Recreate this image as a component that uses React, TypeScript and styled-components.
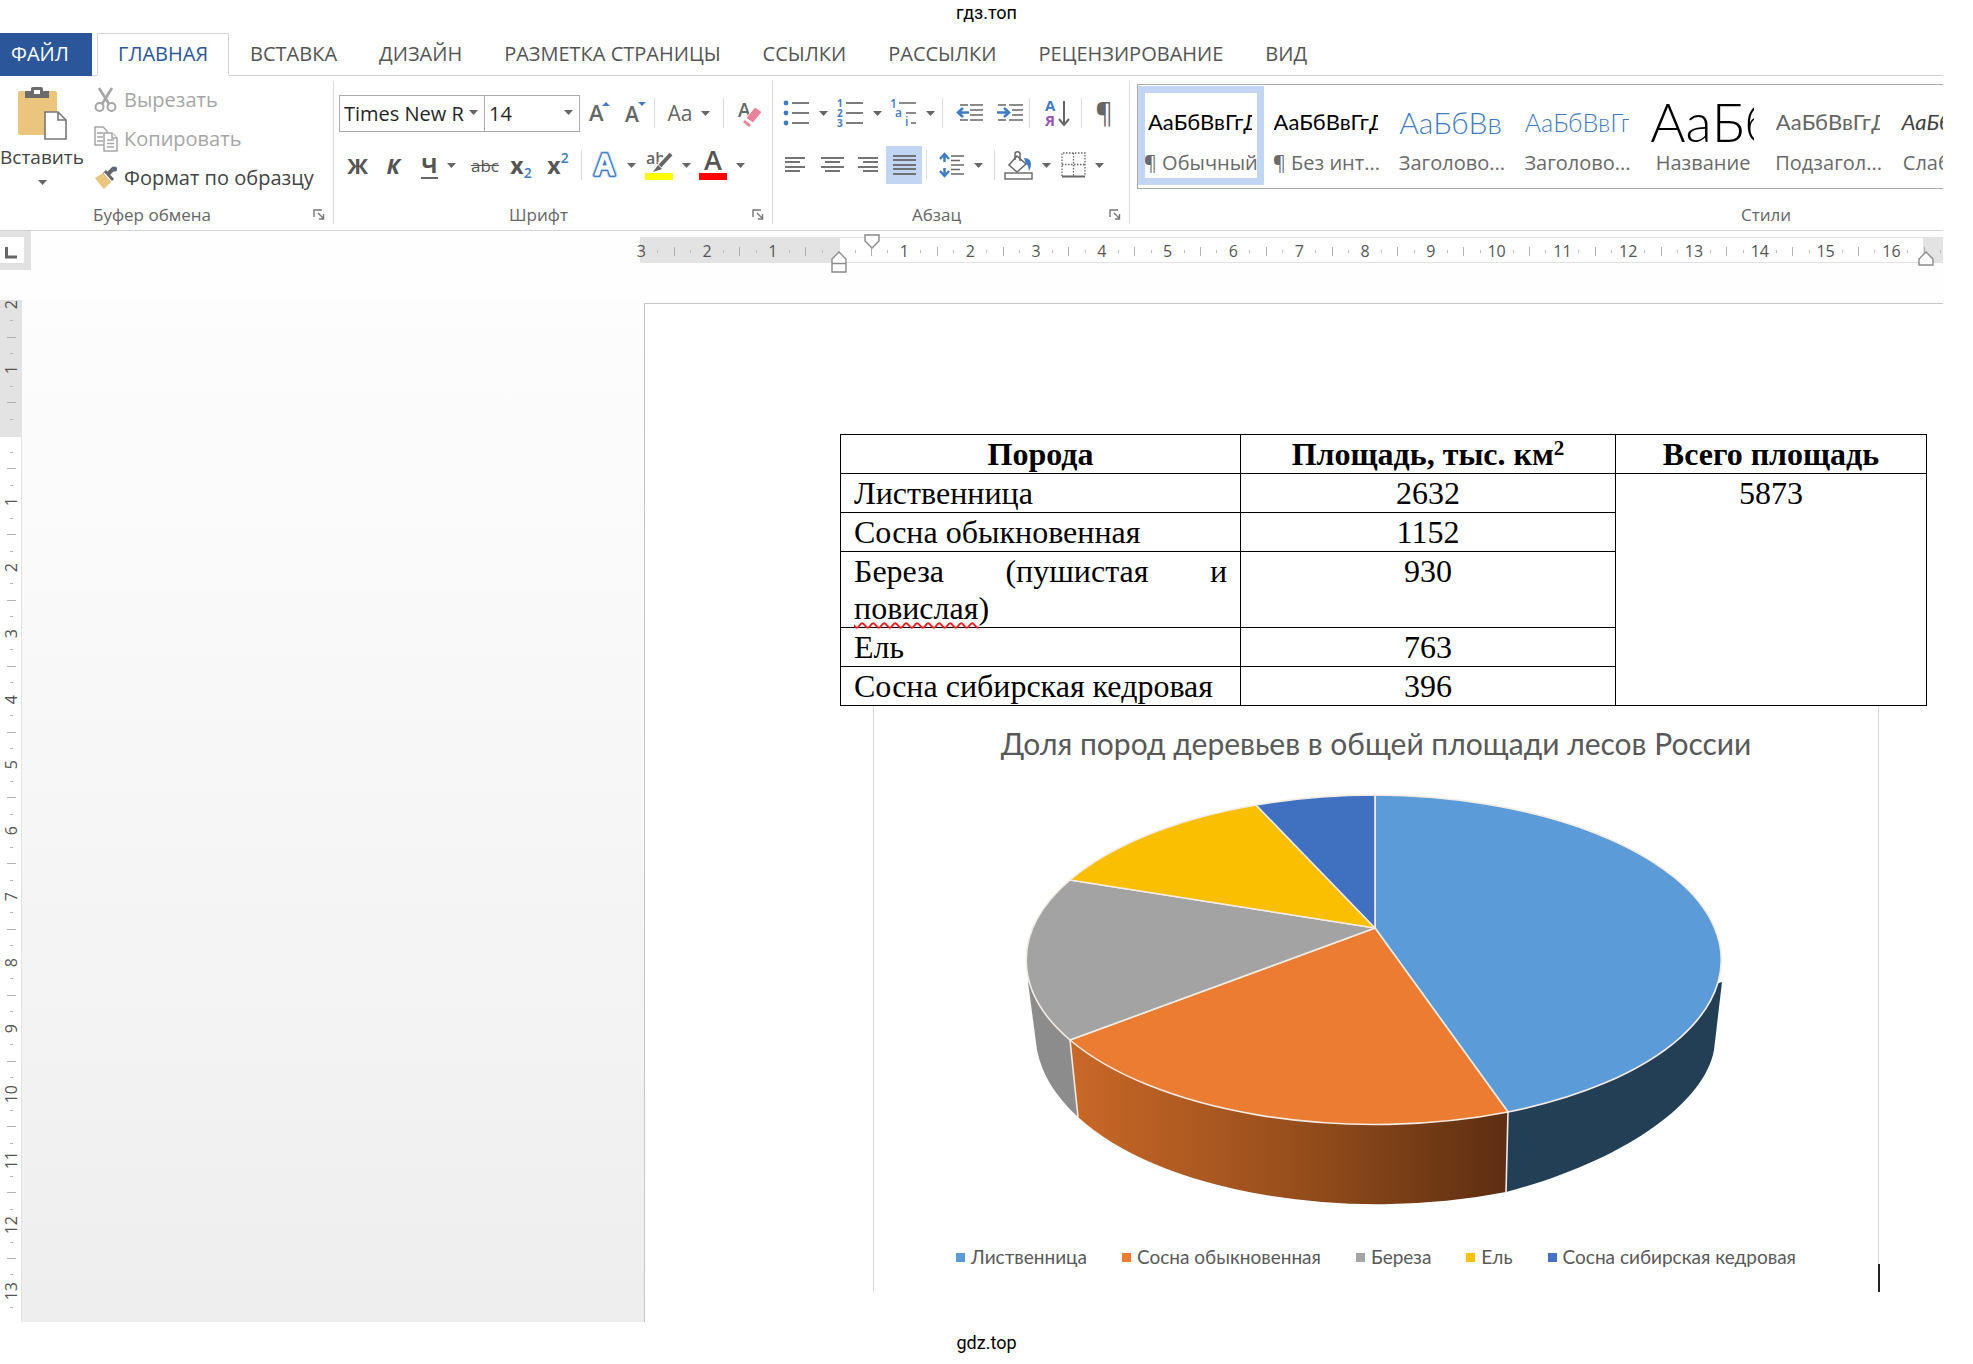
import React from "react";
import styled, { createGlobalStyle, css } from "styled-components";

const ui = `"Open Sans", "Noto Sans", sans-serif`;
const office = `Lato, "Open Sans", sans-serif`;
const ink = "#666666";
const blue = "#3f7cc4";

const Global = createGlobalStyle`
  *, *::before, *::after { box-sizing: border-box; }
  body { margin: 0; background: #fff; font-family: ${ui}; color: #444; }
  button, select { font: inherit; color: inherit; }
  button { border: 0; background: none; padding: 0; cursor: pointer; }
  svg { display: block; flex: none; overflow: visible; }
`;

/* ---------- shell ---------- */

const Shell = styled.div`
  display: flex;
  flex-direction: column;
`;

const SiteMark = styled.div`
  font: 18px/26px Roboto, sans-serif;
  color: #000;
  text-align: center;
`;

const SiteHeader = styled(SiteMark).attrs({ as: "header" })`
  padding-bottom: 7px;
`;

const SiteFooter = styled(SiteMark).attrs({ as: "footer" })`
  padding: 8px 0;
`;

const Frame = styled.main`
  margin-right: 30px;
  overflow: hidden;
`;

/* ---------- tabs ---------- */

const Tabs = styled.nav`
  display: flex;
  height: 43px;
  border-bottom: 1px solid #d4d4d4;
`;

const Tab = styled.button<{ $active?: boolean }>`
  height: 43px;
  padding: 0 20px;
  font-size: 20px;
  line-height: 38px;
  color: #555;
  white-space: nowrap;
  border: solid transparent;
  border-width: 1px 1px 3px;
  ${(p) =>
    p.$active &&
    css`
      color: #2b579a;
      background: #fff;
      border-color: #d4d4d4;
      border-bottom-color: #fff;
    `}
`;

const FileTab = styled(Tab)`
  width: 92px;
  margin-right: 5px;
  padding: 0 0 0 10px;
  text-align: left;
  color: #fff;
  background: #2b579a;
`;

/* ---------- ribbon ---------- */

const Ribbon = styled.div`
  display: flex;
  height: 155px;
  border-bottom: 1px solid #d4d4d4;
  overflow: hidden;
`;

const Group = styled.section<{ $width: number }>`
  display: flex;
  flex-direction: column;
  flex: none;
  width: ${(p) => p.$width}px;
  position: relative;
  &:not(:last-child)::after {
    content: "";
    position: absolute;
    right: 0;
    top: 5px;
    bottom: 6px;
    width: 1px;
    background: #dcdcdc;
  }
`;

const GroupBody = styled.div`
  flex: 1;
  display: flex;
`;

const GroupFoot = styled.div`
  display: flex;
  align-items: center;
  height: 27px;
  padding-bottom: 5px;
  font-size: 17px;
  color: #666;
`;

const GroupName = styled.span`
  flex: 1;
  text-align: center;
`;

const Launcher = styled.button`
  width: 30px;
  padding-left: 9px;
`;

const PasteButton = styled.button`
  display: flex;
  flex-direction: column;
  align-items: center;
  width: 84px;
  padding-top: 10px;
  font-size: 19px;
  line-height: 26px;
  color: #444;
  svg + span { margin-top: 4px; }
  span + svg { margin-top: 10px; }
`;

const ClipActions = styled.div`
  display: flex;
  flex-direction: column;
  padding: 4px 0 0 10px;
`;

const ClipAction = styled.button`
  display: flex;
  align-items: center;
  gap: 6px;
  height: 39px;
  font-size: 20px;
  white-space: nowrap;
  color: #444;
  &:disabled { color: #a6a6a6; }
`;

const ToolRows = styled.div<{ $pad: number }>`
  display: flex;
  flex-direction: column;
  gap: 14px;
  padding: 18px 0 0 ${(p) => p.$pad}px;
`;

const ToolRow = styled.div`
  display: flex;
  align-items: center;
  height: 38px;
`;

const Tool = styled.button<{ $width: number; $on?: boolean }>`
  display: flex;
  align-items: center;
  justify-content: center;
  gap: 9px;
  flex: none;
  width: ${(p) => p.$width}px;
  height: 38px;
  background: ${(p) => (p.$on ? "#c2d5f2" : "none")};
`;

const Divider = styled.i<{ $wide?: boolean }>`
  flex: none;
  width: 1px;
  height: 30px;
  margin: 0 ${(p) => (p.$wide ? 5 : 2)}px 0 ${(p) => (p.$wide ? 4 : 2)}px;
  background: #dcdcdc;
`;

const Combo = styled.div<{ $width: number }>`
  position: relative;
  width: ${(p) => p.$width}px;
  height: 37px;
  svg {
    position: absolute;
    right: 7px;
    top: 15px;
    pointer-events: none;
  }
  & + & { margin-left: -1px; }
`;

const ComboSelect = styled.select`
  appearance: none;
  width: 100%;
  height: 37px;
  padding: 0 18px 0 4px;
  border: 1px solid #ababab;
  border-radius: 0;
  background: #fff;
  color: #262626;
  font-size: 20px;
`;

const FormatGlyph = styled.span<{ $italic?: boolean; $underline?: boolean }>`
  font-size: 22px;
  line-height: 26px;
  font-weight: 700;
  color: #555;
  font-style: ${(p) => (p.$italic ? "italic" : "normal")};
  border-bottom: ${(p) => (p.$underline ? "2px solid #666" : "0")};
`;

const Strike = styled.s`
  font-size: 17px;
  color: #555;
`;

const Script = styled.span<{ $up?: boolean }>`
  display: flex;
  align-items: center;
  height: 30px;
  font-size: 23px;
  font-weight: 700;
  color: #555;
  small {
    align-self: ${(p) => (p.$up ? "flex-start" : "flex-end")};
    font-size: 14px;
    line-height: 15px;
    font-weight: 600;
    color: ${blue};
  }
`;

const CaseGlyph = styled.span`
  font-size: 21px;
  color: ${ink};
`;

const Pilcrow = styled.span`
  font-size: 27px;
  line-height: 30px;
  color: ${ink};
`;

/* ---------- styles gallery ---------- */

const Gallery = styled.div`
  flex: 1;
  display: flex;
  height: 105px;
  margin: 8px 0 0 7px;
  border: 1px solid #ababab;
`;

const GalleryGrid = styled.div`
  display: grid;
  grid-template-columns: repeat(7, 1fr);
  width: 879px;
  padding: 1px 0 3px;
`;

const StyleCard = styled.button<{ $on?: boolean }>`
  display: flex;
  flex-direction: column;
  padding: 5px 3px 0;
  overflow: hidden;
  border: 7px solid ${(p) => (p.$on ? "#c2d5f2" : "transparent")};
`;

const Preview = styled.span<{ $size: number; $color: string; $light?: boolean; $italic?: boolean }>`
  display: flex;
  align-items: flex-end;
  width: 104px;
  height: 46px;
  overflow: hidden;
  white-space: nowrap;
  font-family: ${office};
  font-size: ${(p) => p.$size}px;
  font-weight: ${(p) => (p.$light ? 300 : 400)};
  font-style: ${(p) => (p.$italic ? "italic" : "normal")};
  line-height: 44px;
  color: ${(p) => p.$color};
`;

const StyleName = styled.span`
  align-self: center;
  margin-top: 5px;
  font-size: 20px;
  line-height: 28px;
  color: #6a6a6a;
  white-space: nowrap;
`;

/* ---------- workspace & rulers ---------- */

const Workspace = styled.div`
  background: linear-gradient(#fefefe, #f6f6f6 55%, #eeeeee);
`;

const RulerBar = styled.div`
  display: flex;
  height: 69px;
  background: #fefefe;
`;

const TabStop = styled.button`
  flex: none;
  width: 31px;
  height: 39px;
  padding: 6px 0 0 5px;
  border: solid #e1e1e1;
  border-width: 6px 7px 7px 0;
  background: #fff;
`;

const HRuler = styled.div`
  position: relative;
  flex: none;
  width: 1316px;
  height: 26px;
  margin: 6px 0 0 602px;
`;

const HScale = styled.div`
  display: grid;
  grid-template-columns: repeat(80, 1fr);
  align-items: center;
  height: 26px;
  border: solid transparent;
  border-width: 1px 0;
  background: linear-gradient(90deg, transparent 7px, #e3e3e3 7px 207px, #fff 207px 1290px, #e3e3e3 1290px) padding-box,
    linear-gradient(90deg, transparent 7px, #e3e3e3 7px) border-box;
`;

const HMark = styled.span<{ $kind: "num" | "dot" | "tick" }>`
  justify-self: center;
  display: flex;
  justify-content: center;
  ${(p) =>
    p.$kind === "num"
      ? css`
          width: 20px;
          margin: 0 -2px;
          font-size: 16px;
          line-height: 26px;
          color: #555;
        `
      : css`
          width: 1px;
          height: ${p.$kind === "tick" ? 9 : 3}px;
          background: ${p.$kind === "tick" ? "#b0b0b0" : "#c0c0c0"};
        `}
`;

const Indent = styled.svg<{ $x: number; $y: number }>`
  position: absolute;
  left: ${(p) => p.$x}px;
  top: ${(p) => p.$y}px;
`;

const Desk = styled.div`
  display: flex;
  align-items: flex-start;
`;

const VRuler = styled.div`
  flex: none;
  width: 22px;
  height: 1022px;
  overflow: hidden;
  border-right: 1px solid #e3e3e3;
  background: linear-gradient(#e3e3e3 137px, #fff 137px);
`;

const VScale = styled.div`
  display: grid;
  grid-template-rows: repeat(64, 1fr);
  justify-items: center;
  align-items: center;
  height: 1053px;
  margin-top: -4px;
`;

const VMark = styled.span<{ $kind: "num" | "dot" | "tick" }>`
  ${(p) =>
    p.$kind === "num"
      ? css`
          writing-mode: vertical-rl;
          transform: rotate(180deg);
          margin: -4px 0;
          font-size: 16px;
          line-height: 22px;
          color: #555;
        `
      : css`
          height: 1px;
          width: ${p.$kind === "tick" ? 9 : 3}px;
          background: ${p.$kind === "tick" ? "#b0b0b0" : "#b8b8b8"};
        `}
`;

/* ---------- page ---------- */

const Page = styled.article`
  flex: 1;
  min-width: 0;
  height: 1019px;
  margin: 3px 0 0 622px;
  padding: 130px 16px 0 195px;
  border: solid #c6c6c6;
  border-width: 1px 0 0 1px;
  background: #fff;
`;

const DataTable = styled.table`
  width: 100%;
  table-layout: fixed;
  border-collapse: collapse;
  font: 32px/37px "Liberation Serif", serif;
  color: #000;
  th, td {
    padding: 1px 13px 0;
    border: 1px solid #000;
    vertical-align: top;
    text-align: center;
  }
  tbody th {
    font-weight: 400;
    text-align: justify;
  }
  sup { font-size: 21px; line-height: 0; vertical-align: 10px; }
`;

const Column = styled.col<{ $share: number }>`
  width: ${(p) => p.$share}px;
`;

const Misspelt = styled.span`
  text-decoration: underline wavy #e02020 2px;
  text-underline-offset: 3px;
  text-decoration-skip-ink: none;
`;

const Chart = styled.figure`
  position: relative;
  display: flex;
  flex-direction: column;
  align-items: center;
  height: 586px;
  margin: 0 48px 0 33px;
  padding-top: 17px;
  border: solid #d9d9d9;
  border-width: 0 1px;
  font-family: ${office};
  color: #595959;
`;

const ChartTitle = styled.figcaption`
  font-size: 30px;
  line-height: 40px;
  margin-bottom: 27px;
  white-space: nowrap;
`;

const Legend = styled.ul`
  display: flex;
  gap: 35px;
  margin: 33px 0 0;
  padding: 0;
  list-style: none;
  font-size: 19px;
  line-height: 24px;
  white-space: nowrap;
`;

const LegendItem = styled.li<{ $color: string }>`
  display: flex;
  align-items: center;
  gap: 6px;
  &::before {
    content: "";
    width: 9px;
    height: 9px;
    background: ${(p) => p.$color};
  }
`;

const Caret = styled.i`
  position: absolute;
  right: -2px;
  bottom: 0;
  width: 2px;
  height: 28px;
  background: #222;
`;

/* ---------- icons ---------- */

const Arrow = () => (
  <svg width="9" height="5" viewBox="0 0 9 5">
    <path d="M0 0h9L4.5 5z" fill={ink} />
  </svg>
);

const Lines = ({ rows, w, h }: { rows: [number, number, number][]; w: number; h: number }) => (
  <svg width={w} height={h} viewBox={`0 0 ${w} ${h}`}>
    {rows.map(([x1, x2, y]) => (
      <path key={y} d={`M${x1} ${y}H${x2}`} stroke={ink} strokeWidth="1.8" />
    ))}
  </svg>
);

const LauncherIcon = () => (
  <svg width="12" height="11" viewBox="0 0 12 11" fill="none" stroke="#777" strokeWidth="1.4">
    <path d="M1 8V1h8M5 4l5 5M10.5 5v5H6" />
  </svg>
);

const PasteIcon = () => (
  <svg width="50" height="54" viewBox="0 0 50 54">
    <rect x="1" y="5" width="39" height="44" rx="2" fill="#ebc57e" />
    <path d="M8 12V5h6V3q0-2 2-2h8q2 0 2 2v2h6v7z" fill="#6b6b6b" />
    <rect x="17" y="4" width="6" height="4" fill="#fff" />
    <path d="M28 26h13l8 8v19H28z" fill="#fff" stroke="#777" strokeWidth="1.6" />
    <path d="M41 26v8h8" fill="none" stroke="#777" strokeWidth="1.6" />
  </svg>
);

const CutIcon = () => (
  <svg width="24" height="26" viewBox="0 0 24 26" fill="none" stroke="#a6a6a6">
    <path d="M5 1l10 16M18 1L8 17" strokeWidth="2.6" />
    <circle cx="5.500" cy="20" r="4" strokeWidth="2" />
    <circle cx="17.500" cy="20" r="4" strokeWidth="2" />
  </svg>
);

const CopyIcon = () => (
  <svg width="24" height="26" viewBox="0 0 24 26" fill="#fff" stroke="#a6a6a6" strokeWidth="1.5">
    <path d="M1 1h8l4 4v14H1z" />
    <path d="M3 7h6M3 11h6M3 15h6" />
    <path d="M10 7h8l5 5v13H10z" />
    <path d="M18 7v5h5M13 14h7M13 17.500h7M13 21h7" />
  </svg>
);

const BrushIcon = () => (
  <svg width="24" height="24" viewBox="0 0 24 24">
    <path d="M1 12l8-5 8 9-7 7c-3-3-6-7-9-11z" fill="#ebc57e" />
    <path d="M9 7l3-3 8 9-3 3z" fill="#666" />
    <path d="M14 8l6-6" stroke="#666" strokeWidth="4" />
    <circle cx="20.500" cy="3" r="2.600" fill="#5d6a80" />
    <path d="M10 7l8 9" stroke="#fff" strokeWidth="1.2" />
  </svg>
);

const SizeIcon = ({ up }: { up?: boolean }) => (
  <svg width="22" height="26" viewBox="0 0 22 26">
    <text x="0" y={up ? 21 : 22} fontFamily={ui} fontSize={up ? 22 : 21} fontWeight="600" fill={ink}>
      A
    </text>
    <path d={up ? "M13 6h8l-4-4z" : "M13 2h8l-4 4z"} fill={blue} />
  </svg>
);

const EraseIcon = () => (
  <svg width="24" height="27" viewBox="0 0 24 27">
    <text x="0" y="17" fontFamily={ui} fontSize="19" fontWeight="600" fill={ink}>
      A
    </text>
    <path d="M8 18l9-11 7 5-9 11z" fill="#e8829a" stroke="#fff" strokeWidth="1" />
    <path d="M7 20l6 5-2 2-6-5z" fill="#e8829a" />
  </svg>
);

const EffectIcon = () => (
  <svg width="25" height="30" viewBox="0 0 25 30">
    <g fontFamily={ui} fontSize="29" fontWeight="600" strokeLinejoin="round">
      <text x="2" y="25" fill="#c5dcf5" stroke="#c5dcf5" strokeWidth="6">A</text>
      <text x="2" y="25" fill="#fff" stroke={blue} strokeWidth="4">A</text>
      <text x="2" y="25" fill="#fff" stroke="#fff" strokeWidth="1">A</text>
    </g>
  </svg>
);

const HighlightIcon = () => (
  <svg width="28" height="30" viewBox="0 0 28 30">
    <text x="1" y="14" fontFamily={ui} fontSize="16" fontWeight="600" fill={ink}>ab</text>
    <path d="M26 3l-11 12" stroke="#fff" strokeWidth="7" />
    <path d="M26 4l-11 12" stroke={ink} strokeWidth="4" />
    <path d="M13 15l4 4-9 3z" fill={ink} />
    <rect y="23" width="28" height="7" fill="#ffff00" />
  </svg>
);

const FontColorIcon = () => (
  <svg width="28" height="30" viewBox="0 0 28 30">
    <text x="5" y="20" fontFamily={ui} fontSize="27" fontWeight="600" fill="#555">A</text>
    <rect y="23" width="28" height="7" fill="#ff0000" />
  </svg>
);

const BulletsIcon = () => (
  <svg width="27" height="26" viewBox="0 0 27 26">
    {[3, 13, 23].map((y) => (
      <g key={y}>
        <circle cx="3" cy={y} r="2.4" fill={blue} />
        <path d={`M9 ${y}h17`} stroke={ink} strokeWidth="1.7" />
      </g>
    ))}
  </svg>
);

const NumbersIcon = () => (
  <svg width="27" height="28" viewBox="0 0 27 28">
    {[4, 14, 24].map((y, i) => (
      <g key={y}>
        <text x="0" y={y + 4} fontFamily={ui} fontSize="10" fontWeight="700" fill={blue}>
          {i + 1}
        </text>
        <path d={`M9 ${y}h17`} stroke={ink} strokeWidth="1.7" />
      </g>
    ))}
  </svg>
);

const OutlineIcon = () => (
  <svg width="27" height="28" viewBox="0 0 27 28">
    <g fontFamily={ui} fontSize="12" fontWeight="600" fill={blue}>
      <text x="0" y="9">1</text>
      <text x="5" y="18">a</text>
      <text x="15" y="27">i</text>
    </g>
    <path d="M9 4h17M16 14h10M21 24h5" stroke={ink} strokeWidth="1.7" />
  </svg>
);

const ShiftIcon = ({ right }: { right?: boolean }) => (
  <svg width="26" height="20" viewBox="0 0 26 20" fill="none">
    <path
      d={right ? "M1 2h8M12 2h14M15 7h11M15 12h11M1 17h8M12 17h14" : "M3 2h8M13 2h13M13 7h13M13 12h13M3 17h8M13 17h13"}
      stroke={ink}
      strokeWidth="1.6"
    />
    <path d={right ? "M0 9.500h12M7 5l5 4.500-5 4.500" : "M1 9.500h11M6 5l-5 4.500 5 4.500"} stroke={blue} strokeWidth="2.6" />
  </svg>
);

const SortIcon = () => (
  <svg width="25" height="30" viewBox="0 0 25 30">
    <g fontFamily={ui} fontSize="15" fontWeight="700">
      <text x="0" y="13" fill={blue}>А</text>
      <text x="0" y="28" fill="#9557b5">Я</text>
    </g>
    <path d="M19 3v23M14 21l5 6 5-6" fill="none" stroke={ink} strokeWidth="2" />
  </svg>
);

const SpacingIcon = () => (
  <svg width="26" height="28" viewBox="0 0 26 28" fill="none">
    <path d="M5.500 3v8M1 8l4.500-5L10 8M5.500 17v8M1 20l4.500 5 4.500-5" stroke={blue} strokeWidth="2.500" />
    <path d="M12 5h13M12 9.500h9M12 14h13M12 18.500h9M12 23h13" stroke={ink} strokeWidth="1.600" />
  </svg>
);

const FillIcon = () => (
  <svg width="29" height="29" viewBox="0 0 29 29">
    <path d="M13 5l9 8-9 8-8-7z" fill="#fff" stroke={ink} strokeWidth="1.500" />
    <path d="M11 9V3c0-3 5-3 5 0v7" fill="none" stroke={ink} strokeWidth="1.500" />
    <path d="M20 7c7 0 9 6 5 13-1-5-1-6-3-7z" fill={blue} />
    <rect x="1" y="22" width="27" height="6" fill="#fff" stroke={ink} strokeWidth="1.400" />
  </svg>
);

const BordersIcon = () => (
  <svg width="25" height="26" viewBox="0 0 25 26" fill="none" stroke={ink}>
    <path d="M1 24V1h23v23M12.500 1v23M1 12.500h23" strokeWidth="1.300" strokeDasharray="1.500 1.500" />
    <path d="M1 24.500h23" strokeWidth="2" />
  </svg>
);

/* ---------- data ---------- */

const tabs = ["ГЛАВНАЯ", "ВСТАВКА", "ДИЗАЙН", "РАЗМЕТКА СТРАНИЦЫ", "ССЫЛКИ", "РАССЫЛКИ", "РЕЦЕНЗИРОВАНИЕ", "ВИД"];

const styleCards = [
  { name: "¶ Обычный", text: "АаБбВвГгДд", size: 22, color: "#000" },
  { name: "¶ Без инт...", text: "АаБбВвГгДд", size: 22, color: "#000" },
  { name: "Заголово...", text: "АаБбВвГг", size: 30, color: "#3f7cc4", light: true },
  { name: "Заголово...", text: "АаБбВвГг", size: 25, color: "#3f7cc4", light: true },
  { name: "Название", text: "АаБб", size: 54, color: "#000", light: true },
  { name: "Подзагол...", text: "АаБбВвГгДд", size: 22, color: "#666" },
  { name: "Слабое в...", text: "АаБбВвГгДд", size: 22, color: "#404040", italic: true },
];

const series = [
  { name: "Лиственница", color: "#5b9bd5" },
  { name: "Сосна обыкновенная", color: "#ed7d31" },
  { name: "Береза", color: "#a5a5a5" },
  { name: "Ель", color: "#ffc000" },
  { name: "Сосна сибирская кедровая", color: "#4472c4" },
];

const marks = (from: number, count: number, last: number) =>
  Array.from({ length: count }, (_, i) => {
    const cm = from + Math.floor(i / 4);
    if (i % 4 === 0) return { kind: "num" as const, label: cm === 0 || cm > last ? "" : String(Math.abs(cm)) };
    return { kind: i % 4 === 2 ? ("tick" as const) : ("dot" as const), label: "" };
  });

const Pie = () => (
  <svg width="710" height="422" viewBox="1021 790 710 422" role="img" aria-label="Объёмная круговая диаграмма">
    <defs>
      <linearGradient id="rim" x1="0" x2="1">
        <stop offset="0" stopColor="#c96828" />
        <stop offset="0.5" stopColor="#984f1c" />
        <stop offset="1" stopColor="#5d2e12" />
      </linearGradient>
    </defs>
    <path d="M1028 982L1037 1050C1042 1075 1056 1097 1078 1117L1100 1000z" fill="#8c8c8c" />
    <path d="M1722 982L1714 1050C1704 1105 1620 1162 1506 1192L1508 1050z" fill="#233f55" />
    <path d="M1070 1040L1078 1117A337 161 0 0 0 1506 1192L1508 1112L1375 1000z" fill="url(#rim)" />
    <path d="M1070 1040L1078 1117M1508 1112L1506 1192" stroke="#f3ebe4" strokeWidth="1.600" />
    <g stroke="#f6ece4" strokeWidth="1.600" strokeLinejoin="round">
      <path d="M1375 928V795A349 165 0 0 1 1508 1112z" fill="#5b9bd7" />
      <path d="M1375 928L1508 1112A349 165 0 0 1 1070 1040z" fill="#eb7c31" />
      <path d="M1375 928L1070 1040A349 165 0 0 1 1070 880z" fill="#a3a3a3" />
      <path d="M1375 928L1070 880A349 165 0 0 1 1256 805z" fill="#fabf00" />
      <path d="M1375 928L1256 805A349 165 0 0 1 1375 795z" fill="#4070c0" />
    </g>
  </svg>
);

const Foot = ({ children, launcher = true }: { children: React.ReactNode; launcher?: boolean }) => (
  <GroupFoot>
    <GroupName>{children}</GroupName>
    {launcher && (
      <Launcher aria-label="Параметры группы">
        <LauncherIcon />
      </Launcher>
    )}
  </GroupFoot>
);

export default function App() {
  return (
    <Shell>
      <Global />
      <SiteHeader>гдз.топ</SiteHeader>
      <Frame>
        <Tabs>
          <FileTab>ФАЙЛ</FileTab>
          {tabs.map((t, i) => (
            <Tab key={t} $active={i === 0}>
              {t}
            </Tab>
          ))}
        </Tabs>

        <Ribbon>
          <Group $width={334}>
            <GroupBody>
              <PasteButton>
                <PasteIcon />
                <span>Вставить</span>
                <Arrow />
              </PasteButton>
              <ClipActions>
                <ClipAction disabled>
                  <CutIcon />
                  Вырезать
                </ClipAction>
                <ClipAction disabled>
                  <CopyIcon />
                  Копировать
                </ClipAction>
                <ClipAction>
                  <BrushIcon />
                  Формат по образцу
                </ClipAction>
              </ClipActions>
            </GroupBody>
            <Foot>Буфер обмена</Foot>
          </Group>

          <Group $width={439}>
            <GroupBody>
              <ToolRows $pad={5}>
                <ToolRow>
                  <Combo $width={146}>
                    <ComboSelect aria-label="Шрифт">
                      <option>Times New R</option>
                    </ComboSelect>
                    <Arrow />
                  </Combo>
                  <Combo $width={96}>
                    <ComboSelect aria-label="Размер шрифта">
                      <option>14</option>
                    </ComboSelect>
                    <Arrow />
                  </Combo>
                  <Tool $width={40} aria-label="Увеличить размер"><SizeIcon up /></Tool>
                  <Tool $width={32} aria-label="Уменьшить размер"><SizeIcon /></Tool>
                  <Divider />
                  <Tool $width={64} aria-label="Регистр"><CaseGlyph>Aa</CaseGlyph><Arrow /></Tool>
                  <Divider />
                  <Tool $width={48} aria-label="Очистить формат"><EraseIcon /></Tool>
                </ToolRow>
                <ToolRow>
                  <Tool $width={37}><FormatGlyph>Ж</FormatGlyph></Tool>
                  <Tool $width={34}><FormatGlyph $italic>К</FormatGlyph></Tool>
                  <Tool $width={57}><FormatGlyph $underline>Ч</FormatGlyph><Arrow /></Tool>
                  <Tool $width={36}><Strike>abc</Strike></Tool>
                  <Tool $width={36}><Script>x<small>2</small></Script></Tool>
                  <Tool $width={38}><Script $up>x<small>2</small></Script></Tool>
                  <Divider $wide />
                  <Tool $width={54} aria-label="Эффекты текста"><EffectIcon /><Arrow /></Tool>
                  <Tool $width={54} aria-label="Цвет выделения"><HighlightIcon /><Arrow /></Tool>
                  <Tool $width={54} aria-label="Цвет текста"><FontColorIcon /><Arrow /></Tool>
                </ToolRow>
              </ToolRows>
            </GroupBody>
            <Foot>Шрифт</Foot>
          </Group>

          <Group $width={357}>
            <GroupBody>
              <ToolRows $pad={3}>
                <ToolRow>
                  <Tool $width={58} aria-label="Маркеры"><BulletsIcon /><Arrow /></Tool>
                  <Tool $width={50} aria-label="Нумерация"><NumbersIcon /><Arrow /></Tool>
                  <Tool $width={56} aria-label="Многоуровневый список"><OutlineIcon /><Arrow /></Tool>
                  <Divider />
                  <Tool $width={50} aria-label="Уменьшить отступ"><ShiftIcon /></Tool>
                  <Tool $width={30} aria-label="Увеличить отступ"><ShiftIcon right /></Tool>
                  <Divider $wide />
                  <Tool $width={44} aria-label="Сортировка"><SortIcon /></Tool>
                  <Divider />
                  <Tool $width={40}><Pilcrow>¶</Pilcrow></Tool>
                </ToolRow>
                <ToolRow>
                  <Tool $width={38} aria-label="По левому краю">
                    <Lines w={20} h={18} rows={[[0, 20, 2], [0, 15, 6], [0, 20, 11], [0, 15, 15]]} />
                  </Tool>
                  <Tool $width={36} aria-label="По центру">
                    <Lines w={23} h={18} rows={[[0, 23, 2], [4, 19, 6], [0, 23, 11], [4, 19, 15]]} />
                  </Tool>
                  <Tool $width={36} aria-label="По правому краю">
                    <Lines w={20} h={18} rows={[[0, 20, 2], [5, 20, 6], [0, 20, 11], [5, 20, 15]]} />
                  </Tool>
                  <Tool $width={36} $on aria-label="По ширине">
                    <Lines w={23} h={20} rows={[[0, 23, 1], [0, 23, 5], [0, 23, 10], [0, 23, 14], [0, 23, 19]]} />
                  </Tool>
                  <Divider $wide />
                  <Tool $width={58} aria-label="Интервал"><SpacingIcon /><Arrow /></Tool>
                  <Divider $wide />
                  <Tool $width={54} aria-label="Заливка"><FillIcon /><Arrow /></Tool>
                  <Tool $width={56} aria-label="Границы"><BordersIcon /><Arrow /></Tool>
                </ToolRow>
              </ToolRows>
            </GroupBody>
            <Foot>Абзац</Foot>
          </Group>

          <Group $width={1272}>
            <GroupBody>
              <Gallery>
                <GalleryGrid>
                  {styleCards.map((s, i) => (
                    <StyleCard key={i} $on={i === 0}>
                      <Preview $size={s.size} $color={s.color} $light={s.light} $italic={s.italic}>
                        {s.text}
                      </Preview>
                      <StyleName>{s.name}</StyleName>
                    </StyleCard>
                  ))}
                </GalleryGrid>
              </Gallery>
            </GroupBody>
            <Foot launcher={false}>Стили</Foot>
          </Group>
        </Ribbon>

        <Workspace>
          <RulerBar>
            <TabStop aria-label="Тип табуляции">
              <svg width="12" height="12" viewBox="0 0 12 12">
                <path d="M1.500 0v10H12" fill="none" stroke={ink} strokeWidth="3" />
              </svg>
            </TabStop>
            <HRuler>
              <HScale>
                {marks(-3, 80, 16).map((m, i) => (
                  <HMark key={i} $kind={m.kind}>
                    {m.label}
                  </HMark>
                ))}
              </HScale>
              <Indent $x={231} $y={-3} width="16" height="15" viewBox="0 0 16 15">
                <path d="M1 1h14v6l-7 7-7-7z" fill="#fff" stroke="#8a8a8a" strokeWidth="1.400" />
              </Indent>
              <Indent $x={198} $y={14} width="16" height="22" viewBox="0 0 16 22">
                <path d="M1 21V8l7-7 7 7v13zM1 12.500h14" fill="#fff" stroke="#8a8a8a" strokeWidth="1.400" />
              </Indent>
              <Indent $x={1285} $y={14} width="16" height="15" viewBox="0 0 16 15">
                <path d="M1 14V8l7-7 7 7v6z" fill="#fff" stroke="#8a8a8a" strokeWidth="1.400" />
              </Indent>
            </HRuler>
          </RulerBar>

          <Desk>
            <VRuler>
              <VScale>
                {marks(-2, 64, 13).map((m, i) => (
                  <VMark key={i} $kind={m.kind}>
                    {m.label}
                  </VMark>
                ))}
              </VScale>
            </VRuler>
            <Page>
              <DataTable>
                <colgroup>
                  <Column $share={400} />
                  <Column $share={375} />
                  <Column $share={311} />
                </colgroup>
                <thead>
                  <tr>
                    <th scope="col">Порода</th>
                    <th scope="col">
                      Площадь, тыс. км<sup>2</sup>
                    </th>
                    <th scope="col">Всего площадь</th>
                  </tr>
                </thead>
                <tbody>
                  <tr>
                    <th scope="row">Лиственница</th>
                    <td>2632</td>
                    <td rowSpan={5}>5873</td>
                  </tr>
                  <tr>
                    <th scope="row">Сосна обыкновенная</th>
                    <td>1152</td>
                  </tr>
                  <tr>
                    <th scope="row">
                      Береза (пушистая и <Misspelt>повислая</Misspelt>)
                    </th>
                    <td>930</td>
                  </tr>
                  <tr>
                    <th scope="row">Ель</th>
                    <td>763</td>
                  </tr>
                  <tr>
                    <th scope="row">Сосна сибирская кедровая</th>
                    <td>396</td>
                  </tr>
                </tbody>
              </DataTable>
              <Chart>
                <ChartTitle>Доля пород деревьев в общей площади лесов России</ChartTitle>
                <Pie />
                <Legend>
                  {series.map((s) => (
                    <LegendItem key={s.name} $color={s.color}>
                      {s.name}
                    </LegendItem>
                  ))}
                </Legend>
                <Caret />
              </Chart>
            </Page>
          </Desk>
        </Workspace>
      </Frame>
      <SiteFooter>gdz.top</SiteFooter>
    </Shell>
  );
}
